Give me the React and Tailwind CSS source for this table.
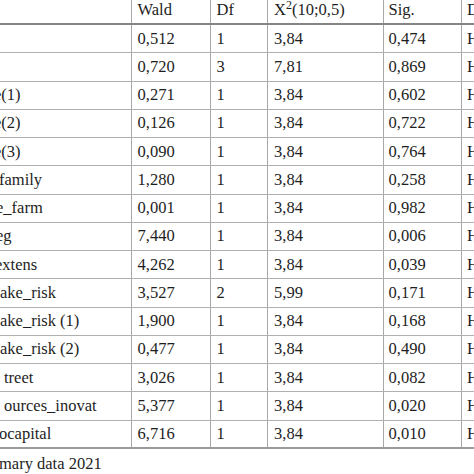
import React from 'react';

const rows = [
  { label: '', shift: 'ml-0', wald: '0,512', df: '1', chi: '3,84', sig: '0,474', dec: 'H0 accepted' },
  { label: '', shift: 'ml-0', wald: '0,720', df: '3', chi: '7,81', sig: '0,869', dec: 'H0 accepted' },
  { label: 'e(1)', shift: '-ml-[6px]', wald: '0,271', df: '1', chi: '3,84', sig: '0,602', dec: 'H0 accepted' },
  { label: 'e(2)', shift: '-ml-[6px]', wald: '0,126', df: '1', chi: '3,84', sig: '0,722', dec: 'H0 accepted' },
  { label: 'e(3)', shift: '-ml-[6px]', wald: '0,090', df: '1', chi: '3,84', sig: '0,764', dec: 'H0 accepted' },
  { label: 'family', shift: '-ml-[1px]', wald: '1,280', df: '1', chi: '3,84', sig: '0,258', dec: 'H0 accepted' },
  { label: 'e_farm', shift: '-ml-[4px]', wald: '0,001', df: '1', chi: '3,84', sig: '0,982', dec: 'H0 accepted' },
  { label: 'eg', shift: '-ml-[4px]', wald: '7,440', df: '1', chi: '3,84', sig: '0,006', dec: 'H0 rejected' },
  { label: 'extens', shift: '-ml-[5px]', wald: '4,262', df: '1', chi: '3,84', sig: '0,039', dec: 'H0 rejected' },
  { label: 'ake_risk', shift: 'ml-0', wald: '3,527', df: '2', chi: '5,99', sig: '0,171', dec: 'H0 accepted' },
  { label: 'ake_risk (1)', shift: 'ml-0', wald: '1,900', df: '1', chi: '3,84', sig: '0,168', dec: 'H0 accepted' },
  { label: 'ake_risk (2)', shift: 'ml-0', wald: '0,477', df: '1', chi: '3,84', sig: '0,490', dec: 'H0 accepted' },
  { label: 'treet', shift: 'ml-[4px]', wald: '3,026', df: '1', chi: '3,84', sig: '0,082', dec: 'H0 accepted' },
  { label: 'ources_inovat', shift: 'ml-[4px]', wald: '5,377', df: '1', chi: '3,84', sig: '0,020', dec: 'H0 rejected' },
  { label: 'ocapital', shift: '-ml-[1px]', wald: '6,716', df: '1', chi: '3,84', sig: '0,010', dec: 'H0 rejected' },
];

const cell = 'box-border h-full border-r border-[#a8a8a8] overflow-hidden whitespace-nowrap flex items-center';

const Row = ({ r, last }) => (
  <div className={`flex box-border h-[28.25px] ${last ? 'border-b-2 border-[#9a9a9a]' : 'border-b border-[#b0b0b0]'}`}>
    <div className={`${cell} w-[131.5px] shrink-0`}>
      <span className={r.shift}>{r.label}</span>
    </div>
    <div className={`${cell} w-[79px] shrink-0 pl-[6px]`}>{r.wald}</div>
    <div className={`${cell} w-[57.5px] shrink-0 pl-[6px]`}>{r.df}</div>
    <div className={`${cell} w-[115.5px] shrink-0 pl-[6px]`}>{r.chi}</div>
    <div className={`${cell} w-[78.5px] shrink-0 pl-[5px]`}>{r.sig}</div>
    <div className="h-full flex items-center pl-[5px] whitespace-nowrap">{r.dec}</div>
  </div>
);

export default function App() {
  return (
    <div className="w-[474px] h-[474px] overflow-hidden bg-white text-[#1e1e1e] text-[16.5px] leading-[18px] font-[family-name:'Liberation_Serif','Times_New_Roman',serif]">
      <div className="-mt-[4px] w-[600px]">
        <div className="flex box-border h-[29px] border-b-2 border-[#858585]">
          <div className={`${cell} w-[131.5px] shrink-0`}></div>
          <div className={`${cell} w-[79px] shrink-0 pl-[6px]`}>Wald</div>
          <div className={`${cell} w-[57.5px] shrink-0 pl-[6px]`}>Df</div>
          <div className={`${cell} w-[115.5px] shrink-0 pl-[6px]`}>
            X<span className="text-[12px] leading-none relative -top-[5px]">2</span>(10;0,5)
          </div>
          <div className={`${cell} w-[78.5px] shrink-0 pl-[5px]`}>Sig.</div>
          <div className="h-full flex items-center pl-[5px] whitespace-nowrap">Decision</div>
        </div>
        {rows.map((r, i) => (
          <Row key={i} r={r} last={i === rows.length - 1} />
        ))}
        <div className="pt-[6px] whitespace-nowrap">
          <span className="-ml-[1px]">mary data 2021</span>
        </div>
      </div>
    </div>
  );
}
